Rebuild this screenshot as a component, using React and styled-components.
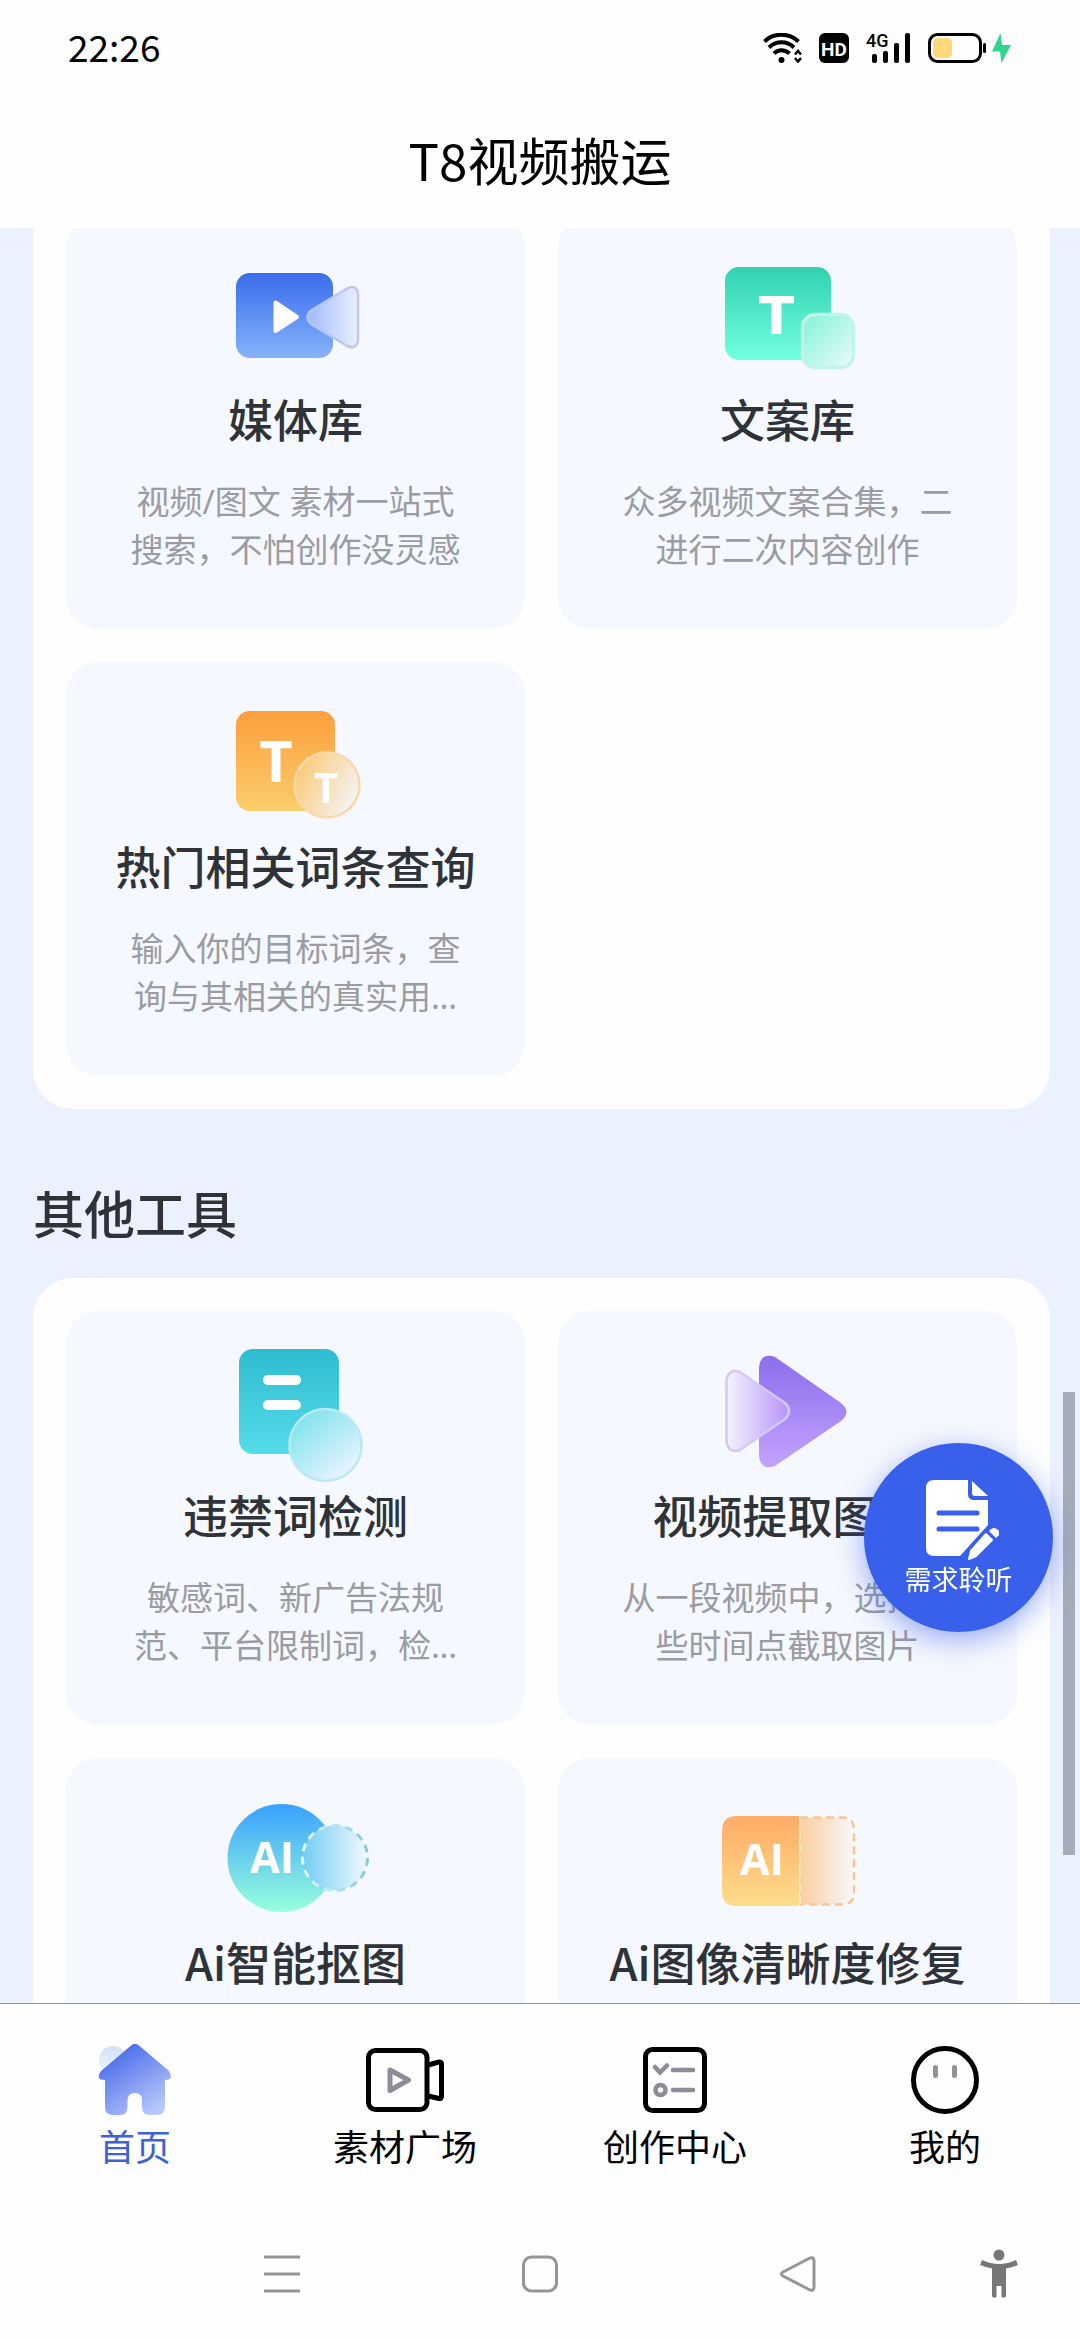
import React, { useLayoutEffect, useRef } from "react";
import styled, { createGlobalStyle } from "styled-components";

const GlobalStyle = createGlobalStyle`
  *, *::before, *::after { box-sizing: border-box; }
  html, body { margin: 0; padding: 0; background: #fefefe; }
  body { font-family: "Noto Sans CJK SC", "Noto Sans", sans-serif; color: #2f3337; }
  a { color: inherit; text-decoration: none; }
  button { font: inherit; border: 0; margin: 0; padding: 0; background: none; cursor: pointer; }
  svg { display: block; flex: none; }
`;

const Screen = styled.div`
  display: flex;
  flex-direction: column;
  height: 100vh;
  background: #fefefe;
`;

const StatusBar = styled.div`
  display: flex;
  align-items: center;
  justify-content: space-between;
  height: 96px;
  padding: 0 68px;
  color: #000;
`;

const Clock = styled.time`
  padding-bottom: 4px;
  font-size: 37px;
  line-height: 48px;
`;

const StatusIcons = styled.div`
  display: flex;
  align-items: center;
  gap: 17px;
`;

const TitleBar = styled.header`
  display: flex;
  align-items: center;
  justify-content: center;
  height: 132px;
  padding-bottom: 6px;
`;

const PageTitle = styled.h1`
  margin: 0;
  font-size: 51px;
  line-height: 64px;
  font-weight: 400;
  color: #000;
`;

const Body = styled.div`
  position: relative;
  flex: 1;
  min-height: 0;
  display: flex;
`;

const Scroller = styled.main`
  flex: 1;
  overflow-y: auto;
  scrollbar-width: none;
  padding: 0 30px 33px 33px;
  background: #ebf1fe;
`;

const Panel = styled.section`
  display: grid;
  grid-template-columns: repeat(2, minmax(0, 1fr));
  gap: 33px;
  padding: 33px;
  border-radius: 40px;
  background: #fefefe;
`;

const SectionTitle = styled.h2`
  margin: 0;
  padding: 71px 0 34px;
  font-size: 51px;
  line-height: 64px;
  font-weight: 500;
`;

const Card = styled.a`
  display: flex;
  flex-direction: column;
  align-items: center;
  padding: 20px 20px 55px;
  border-radius: 32px;
  background: #f5f8fe;
`;

const CardTitle = styled.h3`
  margin: 0 0 27px;
  font-size: 45px;
  line-height: 64px;
  font-weight: 500;
  white-space: nowrap;
`;

const CardText = styled.p`
  margin: 0;
  max-width: 332px;
  min-height: 96px;
  font-family: "Noto Sans", "Noto Sans CJK SC", sans-serif;
  font-size: 33px;
  line-height: 48px;
  text-align: center;
  color: #9a9ca2;
`;

const ScrollThumb = styled.div`
  position: absolute;
  top: 1164px;
  right: 5px;
  width: 12px;
  height: 463px;
  background: #a6adb9;
`;

const FloatingButton = styled.button`
  position: absolute;
  right: 27px;
  bottom: 371px;
  display: flex;
  flex-direction: column;
  align-items: center;
  width: 189px;
  height: 189px;
  padding-top: 36px;
  border-radius: 50%;
  background: #3860ea;
  color: #fff;
  font-size: 27px;
  line-height: 36px;
  box-shadow: 0 8px 28px rgba(56, 96, 234, 0.5);
`;

const TabBar = styled.nav`
  display: grid;
  grid-template-columns: repeat(4, 1fr);
  height: 205px;
  padding-top: 36px;
  border-top: 1px solid #8e9096;
`;

const Tab = styled.a`
  display: flex;
  flex-direction: column;
  align-items: center;
  gap: 1px;
  font-size: 36px;
  line-height: 48px;
  color: ${(p) => (p.$active ? "#3d63d2" : "#000")};
`;

const SystemBar = styled.div`
  display: grid;
  grid-template-columns: 153fr 258fr 258fr 258fr 153fr;
  height: 132px;
`;

const SystemButton = styled.button`
  display: flex;
  align-items: center;
  justify-content: center;
  grid-column: ${(p) => p.$column};
`;

/* ---------- status icons ---------- */

const WifiIcon = () => (
  <svg width="39" height="30" viewBox="0 0 39 30" fill="none" stroke="#000" strokeWidth="4">
    <path d="M1.500 8.500C10.500 -.5 26 -.5 35.500 8.500" />
    <path d="M6 14.500C13 7.500 24 7.500 31 14.500" />
    <path d="M11 20.500C15 16 22 16 26.500 20.500" />
    <circle cx="18.500" cy="27" r="3" fill="#000" stroke="none" />
    <path d="M32 21.500l3-3.500 3 3.500M32 25l3 3.500 3-3.500" strokeWidth="2.500" />
  </svg>
);

const HdIcon = () => (
  <svg width="30" height="30" viewBox="0 0 30 30">
    <rect width="30" height="30" rx="6" />
    <text x="15" y="22.500" textAnchor="middle" fill="#fff" fontFamily="Roboto" fontWeight="700" fontSize="19">HD</text>
  </svg>
);

const SignalIcon = () => (
  <svg width="45" height="30" viewBox="0 0 45 30" overflow="visible">
    <text x="0" y="14" fontFamily="Roboto" fontWeight="500" fontSize="18">4G</text>
    <rect x="6" y="21" width="5" height="9" rx="2" />
    <rect x="17" y="18" width="5" height="12" rx="2" />
    <rect x="28" y="10" width="5" height="20" rx="2" />
    <rect x="39" y="0" width="5" height="30" rx="2" />
  </svg>
);

const BatteryIcon = () => (
  <svg width="84" height="30" viewBox="0 0 84 30">
    <rect x="1.500" y="1.500" width="51" height="27" rx="8" fill="none" stroke="#000" strokeWidth="3" />
    <rect x="5" y="5" width="19" height="20" rx="5" fill="#fdd878" />
    <rect x="55" y="10" width="3" height="10" rx="1.500" />
    <path d="M72.500 0 64 18.500h8L73.500 30 83 12h-9z" fill="#2fd58a" />
  </svg>
);

/* ---------- card illustrations ---------- */

const Art = ({ children }) => (
  <svg width="160" height="152" viewBox="0 0 160 152" aria-hidden="true">{children}</svg>
);

const Fade = ({ id, from, to, x2 = 0, y2 = 1 }) => (
  <linearGradient id={id} x1="0" y1="0" x2={x2} y2={y2}>
    <stop offset="0" stopColor={from} />
    <stop offset="1" stopColor={to} />
  </linearGradient>
);

const MediaArt = () => (
  <Art>
    <defs>
      <Fade id="media" from="#3a6cea" to="#86b2fb" />
      <Fade id="mediaLens" from="#a0b9fa" to="#eaf1fe" x2={1} y2={0} />
      <Fade id="mediaEdge" from="#a9c6ff" to="#c9c3f2" x2={1} y2={0} />
    </defs>
    <rect x="20" y="38" width="97" height="85" rx="14" fill="url(#media)" />
    <path d="M59.500 67.500v28.500L81 82z" fill="#fff" stroke="#fff" strokeWidth="4" strokeLinejoin="round" />
    <path d="M95 75.500 131 53.500Q141 49 142 59V105Q141 115 131 111L95 89Q88 82 95 75.500z" fill="url(#mediaLens)" stroke="url(#mediaEdge)" strokeWidth="2.500" />
  </Art>
);

const CopyArt = () => (
  <Art>
    <defs>
      <Fade id="copy" from="#30d2b1" to="#74ffe0" />
      <Fade id="copyTile" from="#81f3d9" to="#eafbfb" x2={1} />
    </defs>
    <rect x="17" y="32" width="106" height="93" rx="14" fill="url(#copy)" />
    <text x="68.500" y="99" textAnchor="middle" fill="#fff" fontFamily="DejaVu Sans" fontWeight="700" fontSize="52">T</text>
    <rect x="94.500" y="79.500" width="51" height="53" rx="13" fill="url(#copyTile)" stroke="#c3f4ea" strokeWidth="3.500" />
  </Art>
);

const HotArt = () => (
  <Art>
    <defs>
      <Fade id="hot" from="#fb9f3c" to="#fccd6c" />
      <Fade id="hotCoin" from="#fdc466" to="#f4f1ee" x2={1} y2={0.5} />
    </defs>
    <rect x="20" y="29" width="99" height="100" rx="14" fill="url(#hot)" />
    <text x="60" y="100" textAnchor="middle" fill="#fff" fontFamily="Open Sans" fontWeight="700" fontSize="58">T</text>
    <circle cx="111" cy="103" r="32.500" fill="url(#hotCoin)" stroke="#fad9a8" strokeWidth="2.500" />
    <text x="110" y="121" textAnchor="middle" fill="#fff" fontFamily="Open Sans" fontWeight="700" fontSize="42">T</text>
  </Art>
);

const CheckArt = () => (
  <Art>
    <defs>
      <Fade id="check" from="#2fbcd0" to="#55dcea" />
      <Fade id="checkLens" from="#6fe0ea" to="#f0f5ff" x2={0.8} />
    </defs>
    <rect x="23" y="18" width="100" height="105" rx="14" fill="url(#check)" />
    <rect x="47" y="44" width="38" height="10" rx="5" fill="#fff" />
    <rect x="47" y="69" width="38" height="10" rx="5" fill="#fff" />
    <circle cx="109.500" cy="114" r="36" fill="url(#checkLens)" stroke="#b9e9f2" strokeWidth="2.500" />
  </Art>
);

const ExtractArt = () => (
  <Art>
    <defs>
      <Fade id="extract" from="#8c6dec" to="#c3a3fc" />
      <Fade id="extractFront" from="#f4f3fe" to="#b993f8" x2={1} y2={0} />
    </defs>
    <path d="M51 37Q52 21 67 26L133 72Q144 81 133 90L67 135Q52 140 51 124z" fill="url(#extract)" />
    <path d="M18.500 49Q21 37 32 41L77 72Q85 80 77 88L32 119Q21 123 18.500 111z" fill="url(#extractFront)" stroke="#d3c8f5" strokeWidth="2.500" />
  </Art>
);

const CutoutArt = () => (
  <Art>
    <defs>
      <Fade id="cutout" from="#39a1ff" to="#99ffdc" />
      <Fade id="cutoutLens" from="#71cdf3" to="#f3f8fe" x2={1} y2={0} />
      <Fade id="cutoutEdge" from="#e6f8ff" to="#84cbe4" x2={1} y2={0} />
    </defs>
    <circle cx="65.500" cy="80" r="54" fill="url(#cutout)" />
    <text x="56" y="95" textAnchor="middle" fill="#fff" fontFamily="Open Sans" fontWeight="700" fontSize="43">AI</text>
    <circle cx="119" cy="80" r="32.500" fill="url(#cutoutLens)" stroke="url(#cutoutEdge)" strokeWidth="3" strokeDasharray="8 5.600" />
  </Art>
);

const RepairArt = () => (
  <Art>
    <defs>
      <Fade id="repair" from="#ffab66" to="#fddd8c" />
      <Fade id="repairRight" from="#fbcf9f" to="#f8f7fc" x2={1} y2={0} />
    </defs>
    <path d="M91 38H29Q14 38 14 53v60q0 15 15 15h62z" fill="url(#repair)" />
    <path d="M92 39.500h42q12 0 12 12v64q0 11-12 11H92z" fill="url(#repairRight)" />
    <path d="M92 39.500h42q12 0 12 12v64q0 11-12 11H92" fill="none" stroke="#fbc48f" strokeWidth="2.500" strokeDasharray="8 5" />
    <path d="M92 40v87" stroke="#fde5c8" strokeWidth="2" strokeDasharray="8 5" />
    <text x="54" y="97" textAnchor="middle" fill="#fff" fontFamily="Open Sans" fontWeight="700" fontSize="43">AI</text>
  </Art>
);

/* ---------- floating button and tab icons ---------- */

const NoteIcon = () => (
  <svg width="80" height="82" viewBox="-4 0 80 82" aria-hidden="true">
    <path d="M11 1H45V15Q45 21 51 21H65V46L37 77H11Q3 77 3 69V9Q3 1 11 1z" fill="#fff" />
    <path d="M49 2 65 17H52Q49 17 49 14z" fill="#fff" />
    <path d="M16 34h38M16 50h38" stroke="#3860ea" strokeWidth="5" strokeLinecap="round" />
    <path d="M63 55 69 61 53 77 46 80 48 72z" fill="#fff" stroke="#fff" strokeWidth="2" strokeLinejoin="round" />
    <path d="M67 51Q71 47 75 51T74 58L73 59 66 52z" fill="#fff" />
  </svg>
);

const TabIcon = ({ children }) => (
  <svg width="80" height="80" viewBox="0 0 80 80" fill="none" aria-hidden="true">{children}</svg>
);

const HomeIcon = () => (
  <TabIcon>
    <defs>
      <Fade id="home" from="#3459e6" to="#b9c7fb" x2={0.7} />
      <Fade id="homeSun" from="#d3e1f7" to="#eef4fd" />
    </defs>
    <circle cx="18" cy="20" r="14" fill="url(#homeSun)" />
    <path d="M36 5.500Q40 2 44 5.500L74 31Q79 40 70 40V66Q70 75 62 75H55Q47 75 47 67V60Q47 53 40 53T32.500 60V67Q32.500 75 25 75H18Q10 75 10 67V40Q0 40 6 31z" fill="url(#home)" />
  </TabIcon>
);

const VideoIcon = () => (
  <TabIcon>
    <rect x="3.500" y="10.500" width="58.500" height="59" rx="7" stroke="#000" strokeWidth="5" />
    <path d="M63 25 74 22Q76.500 22 76.500 24V56Q76.500 59 74 58.500L63 56" stroke="#000" strokeWidth="5" />
    <path d="M25 30v20.500L43.500 40z" stroke="#8f8c98" strokeWidth="5" strokeLinejoin="round" />
  </TabIcon>
);

const ListIcon = () => (
  <TabIcon>
    <rect x="10.500" y="9.500" width="59" height="61" rx="7" stroke="#000" strokeWidth="5" />
    <path d="M20 27l5 5.500 7-7M38 30h20M38 50h20" stroke="#8f8c98" strokeWidth="4.500" strokeLinecap="round" />
    <circle cx="25.500" cy="50" r="5" stroke="#8f8c98" strokeWidth="4.500" />
  </TabIcon>
);

const FaceIcon = () => (
  <TabIcon>
    <circle cx="40" cy="40" r="31.500" stroke="#000" strokeWidth="5" />
    <path d="M30.500 27.500v8M49.500 27.500v8" stroke="#929296" strokeWidth="5" strokeLinecap="round" />
  </TabIcon>
);

/* ---------- data ---------- */

const mainTools = [
  { title: "媒体库", text: "视频/图文 素材一站式搜索，不怕创作没灵感", Icon: MediaArt },
  { title: "文案库", text: "众多视频文案合集，二进行二次内容创作", Icon: CopyArt },
  { title: "热门相关词条查询", text: "输入你的目标词条，查询与其相关的真实用…", Icon: HotArt },
];

const otherTools = [
  { title: "违禁词检测", text: "敏感词、新广告法规范、平台限制词，检…", Icon: CheckArt },
  { title: "视频提取图片", text: "从一段视频中，选择一些时间点截取图片", Icon: ExtractArt },
  { title: "Ai智能抠图", text: "", Icon: CutoutArt },
  { title: "Ai图像清晰度修复", text: "", Icon: RepairArt },
];

const tabs = [
  { label: "首页", Icon: HomeIcon, active: true },
  { label: "素材广场", Icon: VideoIcon },
  { label: "创作中心", Icon: ListIcon },
  { label: "我的", Icon: FaceIcon },
];

const ToolCard = ({ title, text, Icon }) => (
  <Card href="#tool">
    <Icon />
    <CardTitle>{title}</CardTitle>
    <CardText>{text}</CardText>
  </Card>
);

export default function App() {
  const scroller = useRef(null);

  useLayoutEffect(() => {
    scroller.current.scrollTop = 46;
  }, []);

  return (
    <Screen>
      <GlobalStyle />
      <StatusBar>
        <Clock>22:26</Clock>
        <StatusIcons>
          <WifiIcon />
          <HdIcon />
          <SignalIcon />
          <BatteryIcon />
        </StatusIcons>
      </StatusBar>
      <TitleBar>
        <PageTitle>T8视频搬运</PageTitle>
      </TitleBar>
      <Body>
        <Scroller ref={scroller}>
          <Panel>
            {mainTools.map((tool) => <ToolCard key={tool.title} {...tool} />)}
          </Panel>
          <SectionTitle>其他工具</SectionTitle>
          <Panel>
            {otherTools.map((tool) => <ToolCard key={tool.title} {...tool} />)}
          </Panel>
        </Scroller>
        <ScrollThumb />
        <FloatingButton type="button">
          <NoteIcon />
          需求聆听
        </FloatingButton>
      </Body>
      <TabBar>
        {tabs.map(({ label, Icon, active }) => (
          <Tab key={label} href="#tab" $active={active}>
            <Icon />
            {label}
          </Tab>
        ))}
      </TabBar>
      <SystemBar>
        <SystemButton type="button" aria-label="菜单" $column={2}>
          <svg width="36" height="38" viewBox="0 0 36 38" stroke="#959595" strokeWidth="3">
            <path d="M0 2h36M0 19h36M0 36h36" />
          </svg>
        </SystemButton>
        <SystemButton type="button" aria-label="主屏幕" $column={3}>
          <svg width="36" height="38" viewBox="0 0 36 38" fill="none" stroke="#959595" strokeWidth="3">
            <rect x="1.500" y="2" width="33" height="34" rx="8" />
          </svg>
        </SystemButton>
        <SystemButton type="button" aria-label="返回" $column={4}>
          <svg width="36" height="38" viewBox="0 0 36 38" fill="none" stroke="#959595" strokeWidth="3" strokeLinejoin="round">
            <path d="M3 17 29 3.500Q34 1 34 6V32Q34 37 29 34.500L3 21Q0 19 3 17z" />
          </svg>
        </SystemButton>
        <SystemButton type="button" aria-label="无障碍" $column={5}>
          <svg width="48" height="50" viewBox="0 0 48 50" fill="#777">
            <circle cx="19" cy="6" r="5.500" />
            <path d="M2 11Q19 19 36 11L38 16Q32 18.500 26 19.500V47Q25 50 21.500 48V37H16.500V48Q13 50 12 47V19.500Q6 18.500 0 16z" />
          </svg>
        </SystemButton>
      </SystemBar>
    </Screen>
  );
}
